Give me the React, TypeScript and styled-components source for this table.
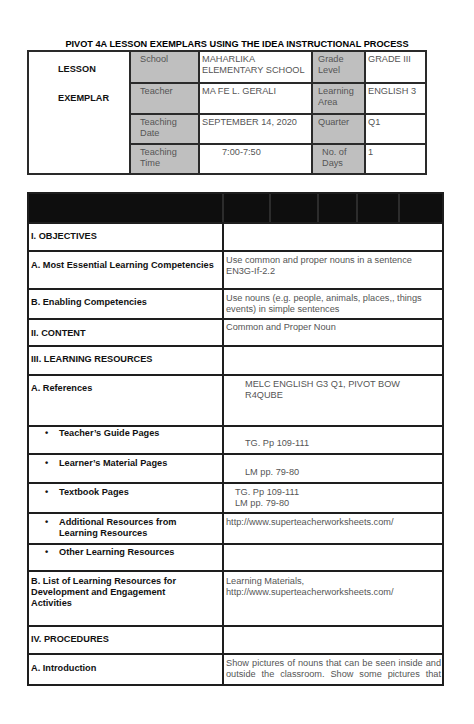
import React from "react";
import styled, { createGlobalStyle } from "styled-components";

const Global = createGlobalStyle`
  html, body { margin: 0; padding: 0; background: #fff; }
  body { font-family: "Liberation Sans", Arial, sans-serif; }
  * { box-sizing: border-box; }
`;

const Page = styled.div`
  width: 474px;
  height: 724px;
  overflow: hidden;
  padding-top: 39px;
  background: #fff;
`;

const Title = styled.h1`
  margin: 0;
  height: 11px;
  font-size: 9.2px;
  line-height: 11px;
  font-weight: 700;
  text-align: center;
  color: #000;
`;

const InfoGrid = styled.div`
  margin-left: 27px;
  width: 400px;
  display: grid;
  grid-template-columns: 100px 67px 111px 51px 59px;
  grid-template-rows: 30px 29px 28px 28px;
  gap: 2px;
  padding: 2px;
  background: #2a2a2a;
`;

const TitleCell = styled.div`
  grid-row: 1 / span 4;
  background: #fff;
  padding: 11.5px 0 0 29px;
  display: flex;
  flex-direction: column;
  gap: 18px;
  font-size: 9.2px;
  line-height: 11px;
  font-weight: 700;
  color: #111;
`;

const InfoCell = styled.div<{ $shade?: boolean; $pl?: number }>`
  background: ${(p) => (p.$shade ? "#bfbfbf" : "#fff")};
  padding: 2px 2px 0 ${(p) => p.$pl ?? 2}px;
  font-size: 9.2px;
  line-height: 11px;
  color: #555;
  overflow: hidden;
`;

const PlanGrid = styled.div`
  margin: 17px 0 0 27px;
  width: 417px;
  display: grid;
  grid-template-columns: 193px 218px;
  grid-template-rows: 28px 26px 36px 28px 25px 27px 49px 26px 27px 28px 29px 25px 53px 26px 29px;
  gap: 2px;
  padding: 2px;
  background: #1e1e1e;
`;

const HeaderBand = styled.div`
  grid-column: 1 / -1;
  display: grid;
  grid-template-columns: 193px 45px 46px 37px 40px 42px;
  gap: 2px;
  background: #2c2c2c;
`;

const HeaderCell = styled.div`
  background: #0e0e0e;
`;

const Label = styled.div<{ $pt: number }>`
  background: #fff;
  padding: ${(p) => p.$pt}px 2px 0 2px;
  font-size: 9.2px;
  line-height: 11px;
  font-weight: 700;
  color: #111;
  overflow: hidden;
`;

const BulletLabel = styled(Label)`
  display: flex;
  padding-left: 16px;
`;

const Bullet = styled.span`
  flex: 0 0 14px;
`;

const Value = styled.div<{ $pt: number; $pl: number; $justify?: boolean }>`
  background: #fff;
  padding: ${(p) => p.$pt}px 1px 0 ${(p) => p.$pl}px;
  font-size: 9.2px;
  line-height: 11px;
  color: #555;
  text-align: ${(p) => (p.$justify ? "justify" : "left")};
  text-align-last: ${(p) => (p.$justify ? "justify" : "auto")};
  overflow: hidden;
`;

const Line = styled.span`
  display: block;
  white-space: nowrap;
`;

type Row = {
  label: string[];
  bullet?: boolean;
  lp: number;
  value: string[];
  vp: number;
  vl?: number;
  justify?: boolean;
};

const rows: Row[] = [
  { label: ["I. OBJECTIVES"], lp: 7, value: [], vp: 2.5 },
  {
    label: ["A. Most Essential Learning Competencies"],
    lp: 7.5,
    value: ["Use common and proper nouns in a sentence", "EN3G-If-2.2"],
    vp: 2.5,
  },
  {
    label: ["B. Enabling Competencies"],
    lp: 6.5,
    value: ["Use nouns (e.g. people, animals, places,, things", "events) in simple sentences"],
    vp: 2.5,
  },
  { label: ["II. CONTENT"], lp: 7.5, value: ["Common and Proper Noun"], vp: 1.5 },
  { label: ["III. LEARNING RESOURCES"], lp: 6.5, value: [], vp: 2.5 },
  {
    label: ["A. References"],
    lp: 6.5,
    value: [" MELC ENGLISH G3 Q1, PIVOT BOW", "R4QUBE"],
    vp: 2.5,
    vl: 21,
  },
  { label: ["Teacher’s Guide Pages"], bullet: true, lp: 0.5, value: ["TG. Pp 109-111"], vp: 11, vl: 21 },
  { label: ["Learner’s Material Pages"], bullet: true, lp: 2.5, value: ["LM  pp. 79-80"], vp: 11.5, vl: 21 },
  { label: ["Textbook Pages"], bullet: true, lp: 2.5, value: ["TG. Pp 109-111", "LM  pp. 79-80"], vp: 2.5, vl: 11 },
  {
    label: ["Additional Resources from", "Learning Resources"],
    bullet: true,
    lp: 2.5,
    value: ["http://www.superteacherworksheets.com/"],
    vp: 2.5,
  },
  { label: ["Other Learning Resources"], bullet: true, lp: 1.5, value: [], vp: 2.5 },
  {
    label: ["B. List of Learning Resources for", "Development and Engagement", "Activities"],
    lp: 3.5,
    value: ["Learning Materials,", "http://www.superteacherworksheets.com/"],
    vp: 3.5,
  },
  { label: ["IV. PROCEDURES"], lp: 6.5, value: [], vp: 2.5 },
  {
    label: ["A. Introduction"],
    lp: 7.5,
    value: ["Show pictures of nouns that can be seen inside and outside the classroom. Show some pictures that"],
    vp: 2.5,
    justify: true,
  },
];

const info: { a: string[]; b: string[]; c: string[]; d: string[]; bIndent?: number; cIndent?: number }[] = [
  { a: ["School"], b: ["MAHARLIKA", "ELEMENTARY SCHOOL"], c: ["Grade", "Level"], d: ["GRADE III"] },
  { a: ["Teacher"], b: ["MA FE L. GERALI"], c: ["Learning", "Area"], d: ["ENGLISH 3"] },
  { a: ["Teaching", "Date"], b: ["SEPTEMBER 14, 2020"], c: ["Quarter"], d: ["Q1"] },
  { a: ["Teaching", "Time"], b: ["7:00-7:50"], c: ["No. of", "Days"], d: ["1"], bIndent: 22, cIndent: 9 },
];

const Lines = ({ lines }: { lines: string[] }) => (
  <>
    {lines.map((l, i) => (
      <Line key={i}>{l}</Line>
    ))}
  </>
);

export default function App() {
  return (
    <Page>
      <Global />
      <Title>PIVOT 4A LESSON EXEMPLARS USING THE IDEA INSTRUCTIONAL PROCESS</Title>
      <InfoGrid>
        <TitleCell>
          <span>LESSON</span>
          <span>EXEMPLAR</span>
        </TitleCell>
        {info.map((r, i) => (
          <React.Fragment key={i}>
            <InfoCell $shade $pl={9}>
              <Lines lines={r.a} />
            </InfoCell>
            <InfoCell $pl={r.bIndent ?? 2}>
              <Lines lines={r.b} />
            </InfoCell>
            <InfoCell $shade $pl={r.cIndent ?? 5}>
              <Lines lines={r.c} />
            </InfoCell>
            <InfoCell>
              <Lines lines={r.d} />
            </InfoCell>
          </React.Fragment>
        ))}
      </InfoGrid>
      <PlanGrid>
        <HeaderBand>
          {Array.from({ length: 6 }).map((_, i) => (
            <HeaderCell key={i} />
          ))}
        </HeaderBand>
        {rows.map((r, i) => (
          <React.Fragment key={i}>
            {r.bullet ? (
              <BulletLabel $pt={r.lp}>
                <Bullet>•</Bullet>
                <div>
                  <Lines lines={r.label} />
                </div>
              </BulletLabel>
            ) : (
              <Label $pt={r.lp}>
                <Lines lines={r.label} />
              </Label>
            )}
            <Value $pt={r.vp} $pl={r.vl ?? 2} $justify={r.justify}>
              {r.justify ? r.value[0] : <Lines lines={r.value} />}
            </Value>
          </React.Fragment>
        ))}
      </PlanGrid>
    </Page>
  );
}
